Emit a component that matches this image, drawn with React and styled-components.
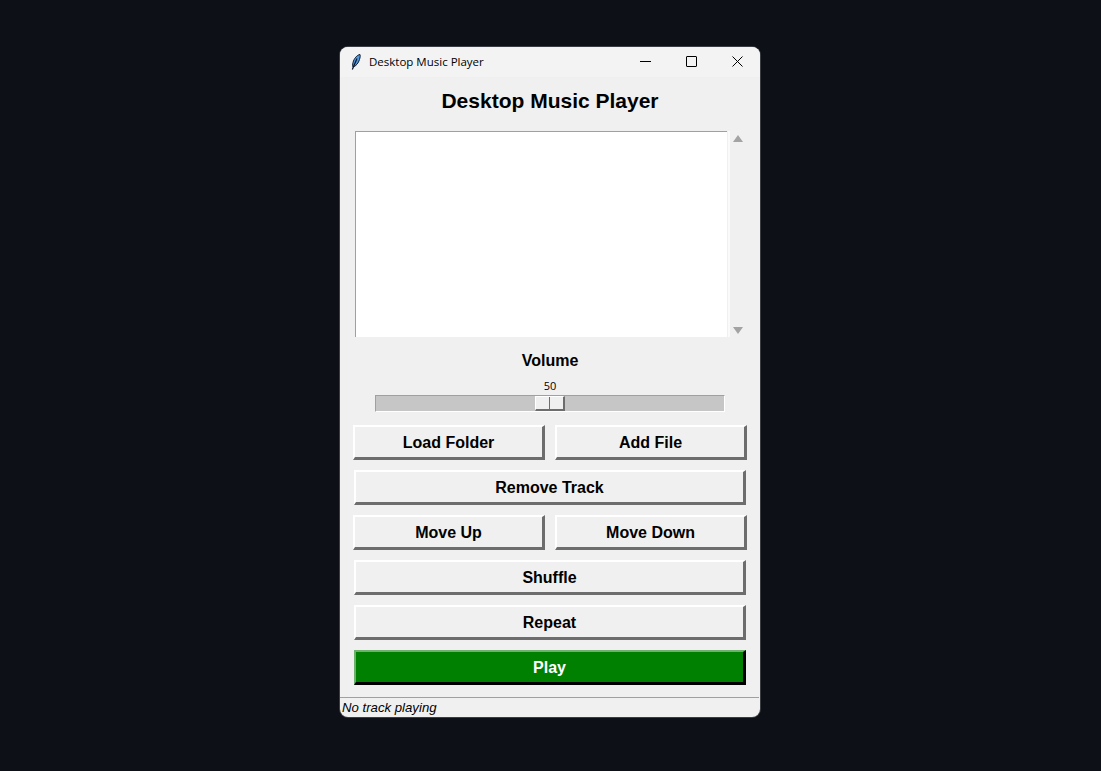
import styled, { createGlobalStyle } from "styled-components";

const GlobalStyle = createGlobalStyle`
  html, body {
    margin: 0;
    height: 100%;
    background: #0d1117;
    overflow: hidden;
  }
`

const Desktop = styled.div`
  width: 1100px;
  height: 771px;
  padding-top: 47px;
  box-sizing: border-box;
  display: flex;
  justify-content: center;
`

const Window = styled.div`
  width: 420px;
  height: 670px;
  border-radius: 8px;
  overflow: hidden;
  background: #f0f0f0;
  display: flex;
  flex-direction: column;
  font-family: "Liberation Sans", Arial, sans-serif;
  color: #000;
  box-shadow: 0 0 0 1px #3a3d42;
`

const TitleBar = styled.div`
  height: 30px;
  background: #f3f3f3;
  display: flex;
  align-items: center;
  padding-left: 9px;
  flex-shrink: 0;
`

const TitleText = styled.span`
  font-family: "Open Sans", "Noto Sans", sans-serif;
  font-size: 11.5px;
  margin-left: 6px;
  margin-top: -2px;
  flex: 1;
  color: #000;
`

const WinButton = styled.div`
  width: 46px;
  height: 30px;
  display: flex;
  align-items: center;
  justify-content: center;
  margin-top: -1px;
`

const Content = styled.div`
  flex: 1;
  display: flex;
  flex-direction: column;
`

const Heading = styled.h1`
  margin: 0 0 6px;
  height: 48px;
  padding-bottom: 2px;
  box-sizing: border-box;
  display: flex;
  align-items: center;
  justify-content: center;
  font-size: 21px;
  font-weight: 700;
  line-height: 1;
`

const ListRow = styled.div`
  display: flex;
  height: 206px;
  padding-left: 15px;
`

const ListBox = styled.div`
  width: 372px;
  background: #fff;
  border-top: 1px solid #a0a0a0;
  border-left: 1px solid #a0a0a0;
  box-sizing: border-box;
`

const ScrollBar = styled.div`
  width: 18px;
  margin-left: 1px;
  padding: 4px 0 3px;
  display: flex;
  flex-direction: column;
  justify-content: space-between;
  align-items: center;
  box-sizing: border-box;
  border-left: 2px solid #fafafa;
`

const Arrow = styled.div`
  width: 0;
  height: 0;
  border-left: 5px solid transparent;
  border-right: 5px solid transparent;
  ${p => p.$down ? "border-top: 7px solid #a3a3a3;" : "border-bottom: 7px solid #a3a3a3;"}
`

const VolumeLabel = styled.div`
  margin-top: 15px;
  height: 18px;
  line-height: 18px;
  text-align: center;
  font-size: 16px;
  font-weight: 700;
`

const ScaleValue = styled.div`
  margin-top: 9px;
  height: 14px;
  line-height: 14px;
  text-align: center;
  font-size: 11px;
  font-family: "Open Sans", "Noto Sans", sans-serif;
`

const Trough = styled.div`
  position: relative;
  margin: 2px 35px 0 35px;
  height: 17px;
  box-sizing: border-box;
  background: #c6c6c6;
  border-top: 1px solid #a0a0a0;
  border-left: 1px solid #a0a0a0;
  border-bottom: 1px solid #fff;
  border-right: 1px solid #fff;
`

const Thumb = styled.div`
  position: absolute;
  left: 159px;
  top: 0;
  width: 30px;
  height: 15px;
  box-sizing: border-box;
  background: #f0f0f0;
  border-top: 1px solid #fff;
  border-left: 1px solid #fff;
  border-right: 2px solid #6d6d6d;
  border-bottom: 2px solid #6d6d6d;

  &::after {
    content: "";
    position: absolute;
    left: 13px;
    top: 0;
    bottom: 0;
    width: 1px;
    background: #6d6d6d;
  }
`

const Buttons = styled.div`
  margin-top: 13px;
  display: flex;
  flex-direction: column;
  gap: 10px;
  padding: 0 14px;
`

const SplitRow = styled.div`
  display: grid;
  grid-template-columns: 192px 192px;
  gap: 10px;
  margin: 0 -1px;
`

const Button = styled.div`
  height: 35px;
  box-sizing: border-box;
  display: flex;
  align-items: center;
  justify-content: center;
  font-size: 16px;
  font-weight: 700;
  padding-top: 1px;
  background: ${p => p.$primary ? "#008000" : "#f0f0f0"};
  color: ${p => p.$primary ? "#fff" : "#000"};
  border-style: solid;
  border-width: 2px 3px 3px 2px;
  border-color: ${p => p.$primary
    ? "#6fb06f #000 #000 #6fb06f"
    : "#fff #6d6d6d #6d6d6d #fff"};
`

const StatusBar = styled.div`
  margin-top: 12px;
  height: 20px;
  box-sizing: border-box;
  border-top: 1px solid #a0a0a0;
  margin-right: 1px;
  padding-left: 2px;
  font-size: 13.200px;
  font-style: italic;
  line-height: 20px;
`

const App = () => {
  return (
    <>
      <GlobalStyle />
      <Desktop>
        <Window>
          <TitleBar>
            <svg width="14" height="16" viewBox="0 0 14 16">
              <path d="M11 0.500C8 1 5 4.500 4 8.500c-.5 2-.4 3.500 0 4.500 3-.8 5.500-4 6.500-7.500.6-2 1-4 .5-5z" fill="#4f9be0" stroke="#0c1a30" strokeWidth="1" />
              <path d="M8 4.500 3.300 15.500" stroke="#0b1626" strokeWidth="1.200" fill="none" />
            </svg>
            <TitleText>Desktop Music Player</TitleText>
            <WinButton>
              <svg width="11" height="11" viewBox="0 0 11 11"><path d="M0 5.500h11" stroke="#000" fill="none" /></svg>
            </WinButton>
            <WinButton>
              <svg width="11" height="11" viewBox="0 0 11 11"><rect x=".5" y=".5" width="10" height="10" rx=".5" stroke="#000" fill="none" /></svg>
            </WinButton>
            <WinButton>
              <svg width="11" height="11" viewBox="0 0 11 11"><path d="M.5.500l10 10M10.500.500l-10 10" stroke="#000" fill="none" /></svg>
            </WinButton>
          </TitleBar>
          <Content>
            <Heading>Desktop Music Player</Heading>
            <ListRow>
              <ListBox />
              <ScrollBar>
                <Arrow />
                <Arrow $down />
              </ScrollBar>
            </ListRow>
            <VolumeLabel>Volume</VolumeLabel>
            <ScaleValue>50</ScaleValue>
            <Trough>
              <Thumb />
            </Trough>
            <Buttons>
              <SplitRow>
                <Button>Load Folder</Button>
                <Button>Add File</Button>
              </SplitRow>
              <Button>Remove Track</Button>
              <SplitRow>
                <Button>Move Up</Button>
                <Button>Move Down</Button>
              </SplitRow>
              <Button>Shuffle</Button>
              <Button>Repeat</Button>
              <Button $primary>Play</Button>
            </Buttons>
            <StatusBar>No track playing</StatusBar>
          </Content>
        </Window>
      </Desktop>
    </>
  )
}

export default App
